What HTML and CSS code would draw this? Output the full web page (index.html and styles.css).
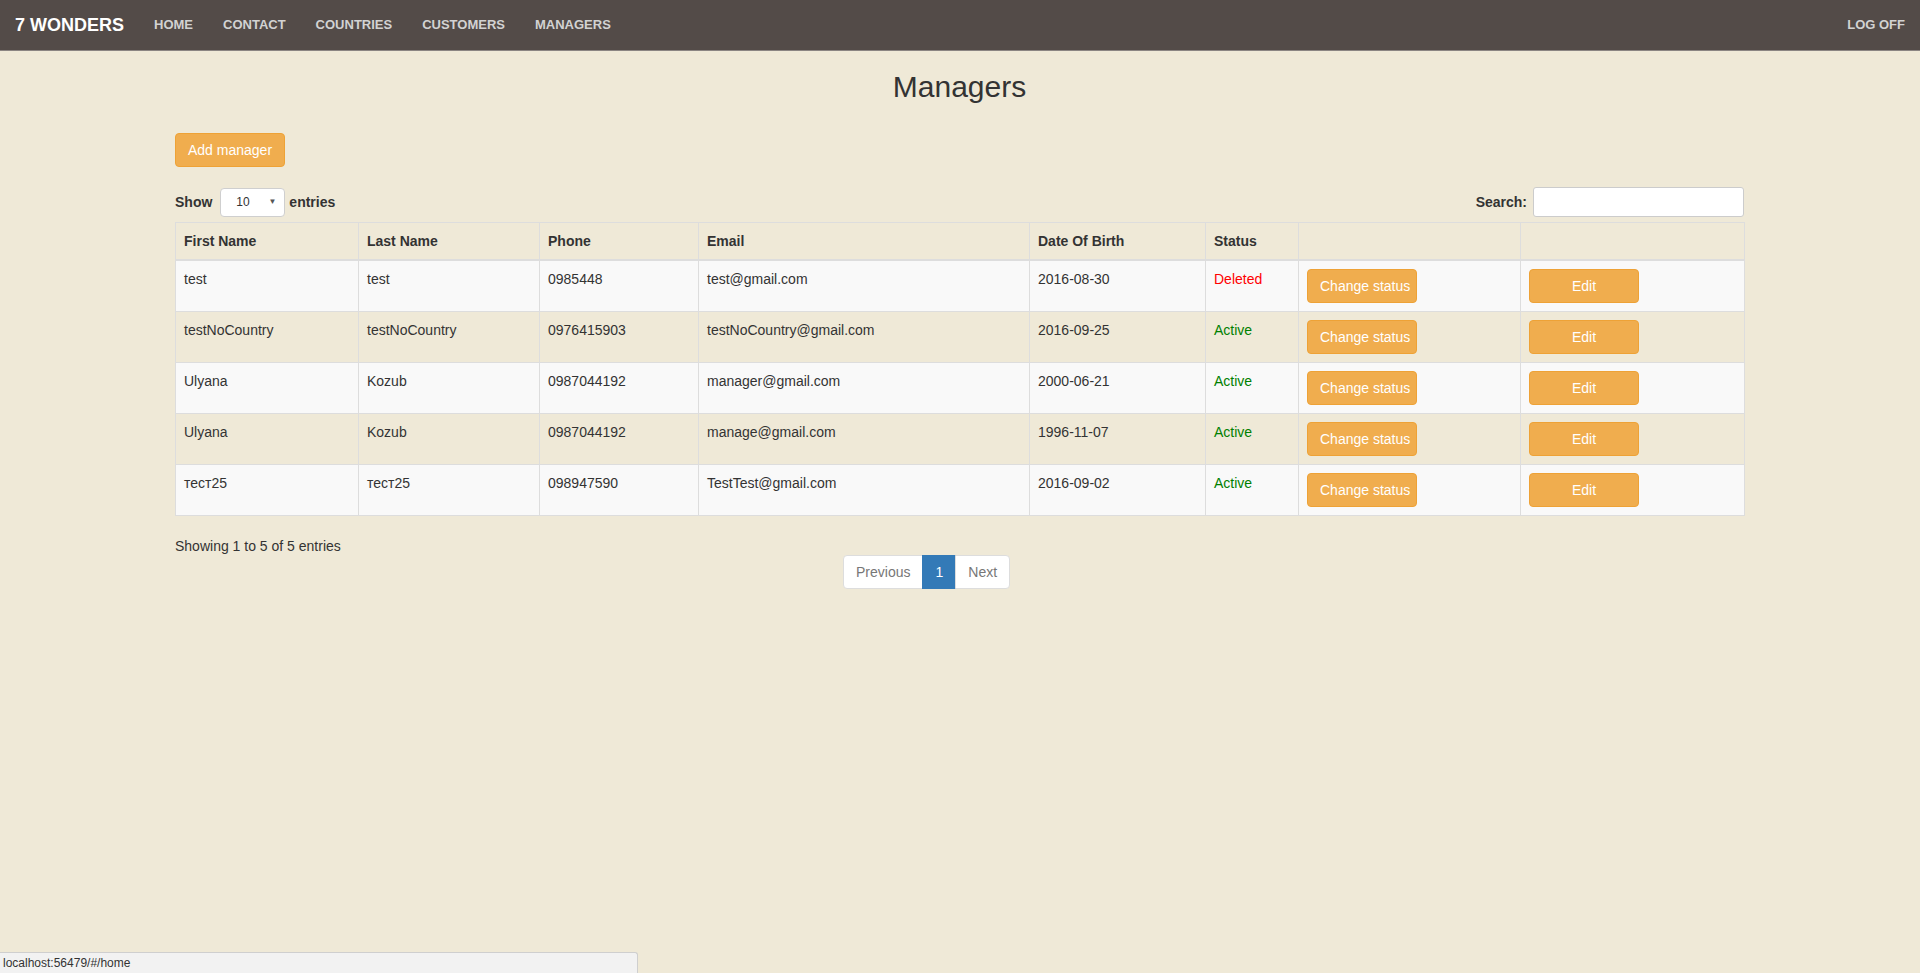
FILE: index.html
```html
<!DOCTYPE html>
<html lang="en">
<head>
<meta charset="utf-8">
<title>Managers - 7 Wonders</title>
<link rel="stylesheet" href="styles.css">
</head>
<body>
<nav class="navbar">
  <a class="brand" href="#">7 WONDERS</a>
  <ul class="nav-links">
    <li><a href="#">HOME</a></li>
    <li><a href="#">CONTACT</a></li>
    <li><a href="#">COUNTRIES</a></li>
    <li><a href="#">CUSTOMERS</a></li>
    <li><a href="#">MANAGERS</a></li>
  </ul>
  <a class="logoff" href="#">LOG OFF</a>
</nav>

<main class="container">
  <h2 class="page-title">Managers</h2>
  <div class="actions">
    <button class="btn btn-warning">Add manager</button>
  </div>

  <div class="dt-top">
    <label class="dt-length">Show
      <span class="select"><span>10</span><span class="arrow">&#9660;</span></span>
      entries</label>
    <label class="dt-search">Search: <input type="text" class="search-input"></label>
  </div>

  <table class="table">
    <colgroup>
      <col class="c1"><col class="c2"><col class="c3"><col class="c4">
      <col class="c5"><col class="c6"><col class="c7"><col class="c8">
    </colgroup>
    <thead>
      <tr>
        <th>First Name</th><th>Last Name</th><th>Phone</th><th>Email</th>
        <th>Date Of Birth</th><th>Status</th><th></th><th></th>
      </tr>
    </thead>
    <tbody>
      <tr>
        <td>test</td><td>test</td><td>0985448</td><td>test@gmail.com</td><td>2016-08-30</td>
        <td class="deleted">Deleted</td>
        <td><button class="btn btn-warning btn-fixed">Change status</button></td>
        <td><button class="btn btn-warning btn-fixed btn-center">Edit</button></td>
      </tr>
      <tr>
        <td>testNoCountry</td><td>testNoCountry</td><td>0976415903</td><td>testNoCountry@gmail.com</td><td>2016-09-25</td>
        <td class="active">Active</td>
        <td><button class="btn btn-warning btn-fixed">Change status</button></td>
        <td><button class="btn btn-warning btn-fixed btn-center">Edit</button></td>
      </tr>
      <tr>
        <td>Ulyana</td><td>Kozub</td><td>0987044192</td><td>manager@gmail.com</td><td>2000-06-21</td>
        <td class="active">Active</td>
        <td><button class="btn btn-warning btn-fixed">Change status</button></td>
        <td><button class="btn btn-warning btn-fixed btn-center">Edit</button></td>
      </tr>
      <tr>
        <td>Ulyana</td><td>Kozub</td><td>0987044192</td><td>manage@gmail.com</td><td>1996-11-07</td>
        <td class="active">Active</td>
        <td><button class="btn btn-warning btn-fixed">Change status</button></td>
        <td><button class="btn btn-warning btn-fixed btn-center">Edit</button></td>
      </tr>
      <tr>
        <td>тест25</td><td>тест25</td><td>098947590</td><td>TestTest@gmail.com</td><td>2016-09-02</td>
        <td class="active">Active</td>
        <td><button class="btn btn-warning btn-fixed">Change status</button></td>
        <td><button class="btn btn-warning btn-fixed btn-center">Edit</button></td>
      </tr>
    </tbody>
  </table>

  <div class="dt-bottom">
    <div class="dt-info">Showing 1 to 5 of 5 entries</div>
    <ul class="pagination">
      <li class="disabled"><a href="#">Previous</a></li>
      <li class="current"><a href="#">1</a></li>
      <li class="disabled"><a href="#">Next</a></li>
    </ul>
  </div>
</main>

<div class="statusbar">localhost:56479/#/home</div>
</body>
</html>
```

FILE: styles.css
```css
* { box-sizing: border-box; }

html, body {
  margin: 0;
  padding: 0;
}

body {
  background: #efe9d7;
  color: #333;
  font-family: "Liberation Sans", Arial, Helvetica, sans-serif;
  font-size: 14px;
  line-height: 20px;
  min-height: 973px;
}

a { text-decoration: none; }

/* ---------- navbar ---------- */
.navbar {
  display: flex;
  align-items: center;
  height: 51px;
  padding-bottom: 1px;
  background: #534b48;
  border-bottom: 1px solid #8b8582;
}

.brand {
  color: #fff;
  font-weight: bold;
  font-size: 18px;
  line-height: 20px;
  padding: 0 15px;
}

.nav-links {
  display: flex;
  list-style: none;
  margin: 0;
  padding: 0;
}

.nav-links a,
.logoff {
  display: block;
  color: #d2d2d2;
  font-weight: bold;
  font-size: 13px;
  padding: 0 15px;
}

.logoff { margin-left: auto; }

/* ---------- content ---------- */
.container {
  margin: 0 176px 0 175px;
}

.page-title {
  margin: 19px 0 0;
  text-align: center;
  font-size: 30px;
  font-weight: normal;
  line-height: 33px;
}

.actions {
  margin-top: 30px;
}

.btn {
  display: inline-block;
  font-family: inherit;
  font-size: 14px;
  line-height: 20px;
  padding: 6px 12px;
  border: 1px solid transparent;
  border-radius: 4px;
  cursor: pointer;
  white-space: nowrap;
  text-align: left;
}

.btn-warning {
  background: #f0ad4e;
  border-color: #eea236;
  color: #fff;
}

.btn-fixed {
  width: 110px;
  overflow: visible;
}

.btn-center { text-align: center; }

/* ---------- datatable top ---------- */
.dt-top {
  display: flex;
  justify-content: space-between;
  align-items: center;
  height: 30px;
  margin-top: 20px;
}

.dt-length,
.dt-search {
  display: flex;
  align-items: center;
  font-weight: bold;
}

.select {
  display: flex;
  align-items: center;
  width: 65px;
  height: 29px;
  margin: 0 4px 0 8px;
  padding: 0 8px 0 15px;
  background: #fff;
  border: 1px solid #cfcfcf;
  border-radius: 4px;
  font-size: 12px;
  font-weight: normal;
}

.select .arrow {
  margin-left: auto;
  font-size: 8px;
  color: #555;
}

.search-input {
  width: 211px;
  height: 30px;
  margin-left: 6px;
  border: 1px solid #ccc;
  border-radius: 3px;
  background: #fff;
}

/* ---------- table ---------- */
.table {
  width: 100%;
  margin-top: 5px;
  border-collapse: collapse;
  table-layout: fixed;
  border: 1px solid #ddd;
}

.c1 { width: 183px; }
.c2 { width: 181px; }
.c3 { width: 159px; }
.c4 { width: 331px; }
.c5 { width: 176px; }
.c6 { width: 93px; }
.c7 { width: 222px; }
.c8 { width: 224px; }

.table th,
.table td {
  padding: 8px;
  border: 1px solid #ddd;
  text-align: left;
  vertical-align: top;
  line-height: 20px;
}

.table th {
  font-weight: bold;
  border-bottom-width: 2px;
}

.table tbody tr:nth-child(odd) { background: #f9f9f9; }

.deleted { color: #ff0000; }
.active { color: #008000; }

/* ---------- datatable bottom ---------- */
.dt-bottom {
  display: grid;
  grid-template-columns: 668px auto;
  margin-top: 20px;
}

.dt-info {
  grid-column: 1;
  grid-row: 1;
}

.pagination {
  grid-column: 2;
  grid-row: 2;
  justify-self: start;
  display: flex;
  list-style: none;
  margin: -1px 0 0;
  padding: 0;
}

.pagination a {
  display: block;
  padding: 6px 12px;
  line-height: 20px;
  border: 1px solid #ddd;
  margin-left: -1px;
  background: #fff;
  color: #777;
}

.pagination li:first-child a {
  margin-left: 0;
  border-radius: 4px 0 0 4px;
}

.pagination li:last-child a {
  border-radius: 0 4px 4px 0;
}

.pagination .current a {
  background: #337ab7;
  border-color: #337ab7;
  color: #fff;
}

/* ---------- browser status bar ---------- */
.statusbar {
  position: fixed;
  left: 0;
  bottom: 0;
  width: 638px;
  height: 21px;
  padding: 2px 3px 0;
  background: #f2f2f2;
  border-top: 1px solid #cfcfcf;
  border-right: 1px solid #cfcfcf;
  border-top-right-radius: 3px;
  font-size: 12px;
  line-height: 16px;
  color: #333;
}
```
